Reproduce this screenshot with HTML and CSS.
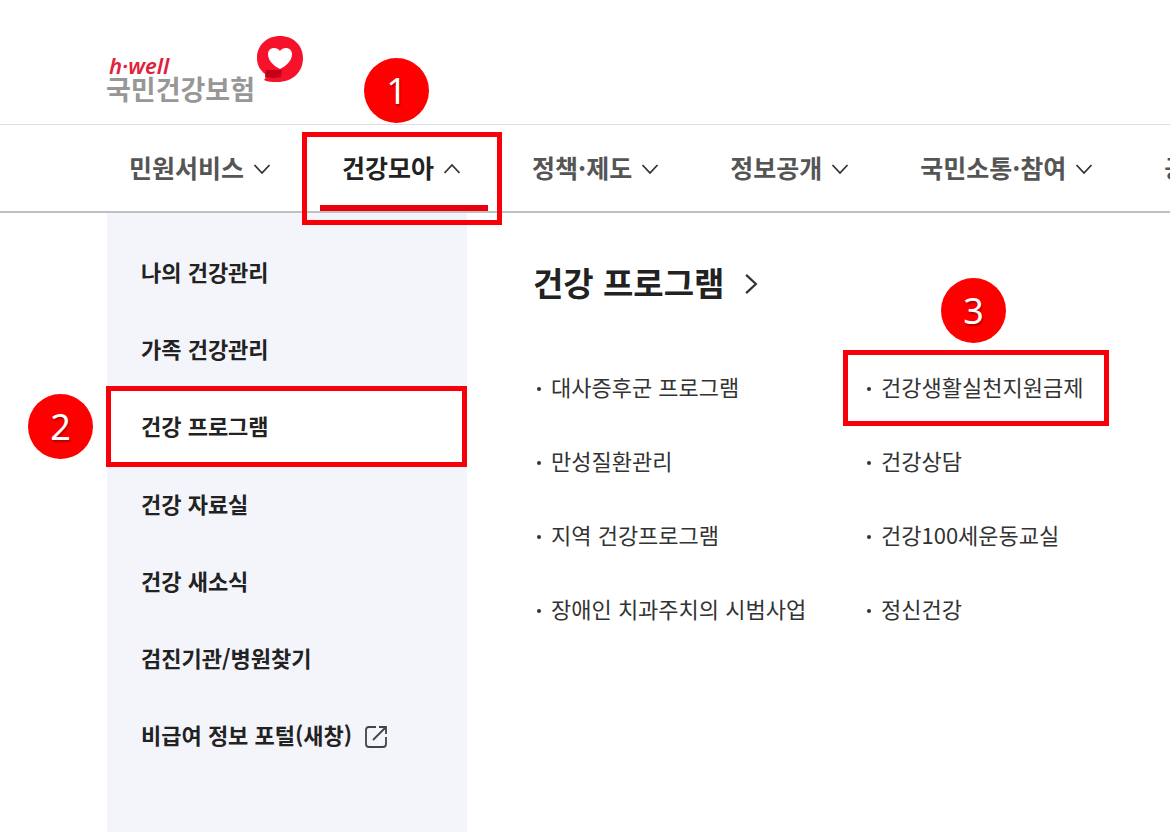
FILE: index.html
```html
<!DOCTYPE html>
<html lang="ko">

<head>
    <meta charset="UTF-8">
    <meta name="viewport" content="width=device-width, initial-scale=1.0">
    <title>국민건강보험</title>
    <link rel="stylesheet" href="styles.css">
</head>

<body>

    <svg class="sprite" aria-hidden="true">
        <symbol id="chevron" viewBox="0 0 18 18">
            <path d="M1.5 5L9 13L16.5 5" fill="none" stroke="currentColor" stroke-width="1.8" />
        </symbol>
    </svg>

    <header class="header">
        <a class="logo" href="#">
            <span class="logo-text">
                <span class="logo-en">h·well</span>
                <span class="logo-ko">국민건강보험</span>
            </span>
            <svg class="logo-mark" viewBox="0 0 46 46" aria-hidden="true">
                <path d="M23 0C36 0 46 9 46 22C46 36 36 46 20 46C15 46 11 46 7 44C9 42 9 40 8 38C3 34 0 29 0 22C0 9 10 0 23 0Z" fill="#f5122a" />
                <path d="M9 34L25 34L24 41L17 42L8 41Z" fill="#c2001a" />
                <path d="M23 33C17 30 11 25 11 18C11 11 20 10 23 15C26 10 35 11 35 18C35 25 29 30 23 33Z" fill="#fff" />
            </svg>
        </a>
    </header>

    <nav class="gnb">
        <ul class="gnb-list">
            <li><button type="button" class="gnb-item">민원서비스<svg class="arrow"><use href="#chevron" /></svg></button></li>
            <li class="current">
                <button type="button" class="gnb-item" aria-expanded="true">건강모아<svg class="arrow up"><use href="#chevron" /></svg></button>
                <span class="mark"></span>
                <span class="badge">1</span>
            </li>
            <li><button type="button" class="gnb-item">정책·제도<svg class="arrow"><use href="#chevron" /></svg></button></li>
            <li><button type="button" class="gnb-item">정보공개<svg class="arrow"><use href="#chevron" /></svg></button></li>
            <li><button type="button" class="gnb-item">국민소통·참여<svg class="arrow"><use href="#chevron" /></svg></button></li>
            <li><button type="button" class="gnb-item">공단소개<svg class="arrow"><use href="#chevron" /></svg></button></li>
        </ul>
    </nav>

    <div class="panel">
        <ul class="side">
            <li><a href="#">나의 건강관리</a></li>
            <li><a href="#">가족 건강관리</a></li>
            <li class="active">
                <a href="#">건강 프로그램</a>
                <span class="mark"></span>
                <span class="badge">2</span>
            </li>
            <li><a href="#">건강 자료실</a></li>
            <li><a href="#">건강 새소식</a></li>
            <li><a href="#">검진기관/병원찾기</a></li>
            <li>
                <a href="#">비급여 정보 포털(새창)<svg class="external" viewBox="0 0 24 24" aria-hidden="true">
                    <path d="M12 2H5Q2 2 2 5V19Q2 22 5 22H19Q22 22 22 19V12M15 2H22V9M22 2L9 15" fill="none" stroke="currentColor" stroke-width="1.8" />
                </svg></a>
            </li>
        </ul>

        <main class="content">
            <h2><a href="#">건강 프로그램<svg class="arrow next"><use href="#chevron" /></svg></a></h2>
            <ul class="links">
                <li><a href="#">대사증후군 프로그램</a></li>
                <li class="picked">
                    <a href="#">건강생활실천지원금제</a>
                    <span class="mark"></span>
                    <span class="badge">3</span>
                </li>
                <li><a href="#">만성질환관리</a></li>
                <li><a href="#">건강상담</a></li>
                <li><a href="#">지역 건강프로그램</a></li>
                <li><a href="#">건강100세운동교실</a></li>
                <li><a href="#">장애인 치과주치의 시범사업</a></li>
                <li><a href="#">정신건강</a></li>
            </ul>
        </main>
    </div>

</body>

</html>
```
FILE: styles.css
```css
* {
    box-sizing: border-box;
}

body {
    display: flex;
    flex-direction: column;
    min-height: 100vh;
    margin: 0;
    font-family: "Noto Sans CJK KR", sans-serif;
    background-color: #fff;
    color: #222;
    overflow-x: hidden;
}

ul {
    list-style: none;
    margin: 0;
    padding: 0;
}

a {
    color: inherit;
    text-decoration: none;
}

.sprite {
    position: absolute;
    width: 0;
    height: 0;
}

/* header */
.header {
    padding: 36px 106px 22px;
}

.logo {
    display: inline-flex;
    align-items: flex-start;
    gap: 2px;
    vertical-align: top;
}

.logo-text {
    display: flex;
    flex-direction: column;
    padding-top: 18px;
}

.logo-en {
    padding-left: 3px;
    font-family: "Noto Sans", sans-serif;
    font-size: 22px;
    font-style: italic;
    font-weight: 600;
    line-height: 22px;
    color: #e0213a;
}

.logo-ko {
    font-size: 27px;
    font-weight: 700;
    line-height: 26px;
    color: #979797;
}

.logo-mark {
    width: 46px;
    height: 46px;
}

/* main menu */
.gnb {
    border-top: 1px solid #dcdee2;
    border-bottom: 2px solid #bfc0c4;
}

.gnb-list {
    display: flex;
    gap: 22px;
    padding-left: 107px;
}

.gnb-list li {
    flex: none;
    position: relative;
}

.gnb-item {
    display: flex;
    align-items: center;
    gap: 9px;
    height: 86px;
    padding: 0 27px 2px 22px;
    border: 0;
    background: none;
    font-family: inherit;
    font-size: 25px;
    font-weight: 700;
    color: #555;
    cursor: pointer;
}

.current .gnb-item {
    color: #222;
    box-shadow: inset 0 -6px #ea000c;
}

.arrow {
    width: 18px;
    height: 18px;
    margin-top: 4px;
    color: #333;
}

.arrow.up {
    transform: rotate(180deg);
}

.arrow.next {
    width: 22px;
    height: 22px;
    transform: rotate(-90deg);
}

/* sub menu */
.panel {
    display: flex;
    flex: 1;
    padding-left: 107px;
}

.side {
    flex: none;
    width: 360px;
    padding: 21px 0 56px;
    background-color: #f4f5fb;
}

.side li {
    position: relative;
}

.side a {
    display: flex;
    align-items: center;
    gap: 12px;
    height: 77px;
    padding: 0 0 3px 34px;
    font-size: 22px;
    font-weight: 700;
}

.side .active {
    margin-bottom: 1px;
    background-color: #fff;
}

.external {
    width: 24px;
    height: 24px;
    margin-top: 6px;
    color: #444;
}

.content {
    flex: 1;
    padding: 45px 0 0 66px;
}

.content h2 {
    margin: 0;
    font-size: 33px;
    line-height: 48px;
}

.content h2 a {
    display: inline-flex;
    align-items: center;
    gap: 16px;
}

.links {
    display: grid;
    grid-template-columns: 330px 1fr;
    justify-items: start;
    margin-top: 45px;
}

.links li {
    position: relative;
}

.links a {
    display: flex;
    align-items: center;
    height: 74px;
    padding-bottom: 4px;
    font-size: 22px;
    white-space: nowrap;
    color: #333;
}

.links a::before {
    content: "";
    width: 4px;
    height: 4px;
    margin: 6px 10px 0 4px;
    border-radius: 50%;
    background-color: #333;
}

/* step guide */
.mark {
    position: absolute;
    border: 5px solid #f8000a;
    pointer-events: none;
}

.badge {
    position: absolute;
    width: 65px;
    height: 65px;
    border-radius: 50%;
    background-color: #fe0000;
    font-family: "Noto Sans", sans-serif;
    font-size: 36px;
    line-height: 65px;
    text-align: center;
    text-shadow: 1px 2px 2px rgba(0, 0, 0, 0.3);
    color: #fff;
}

.current .mark {
    inset: 7px -14px -14px -18px;
}

.current .badge {
    top: -67px;
    left: 44px;
}

.active .mark {
    inset: -2px 0 -2px -1px;
}

.active .badge {
    top: 6px;
    left: -79px;
}

.picked .mark {
    inset: -1px -26px -1px -20px;
}

.picked .badge {
    top: -73px;
    left: 78px;
}
```
